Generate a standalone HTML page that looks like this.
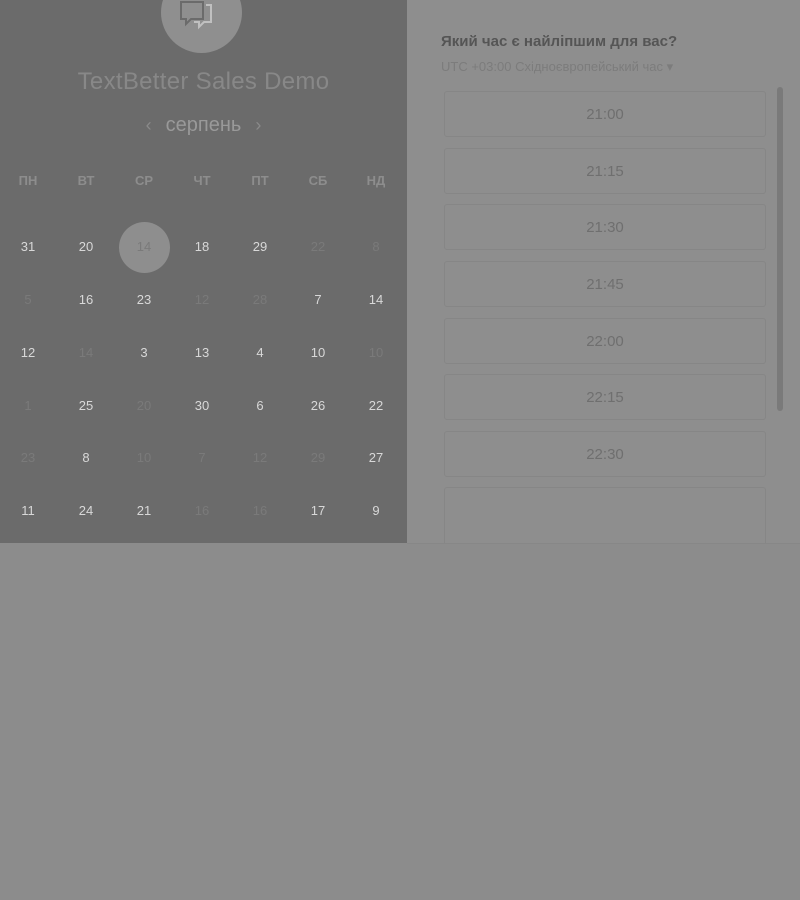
<!DOCTYPE html>
<html><head><meta charset="utf-8"><style>
body{margin:0;width:800px;height:900px;background:#8c8c8c;font-family:"Liberation Sans",sans-serif;position:relative;overflow:hidden}
.left{position:absolute;left:0;top:0;width:407px;height:543px;background:#6b6b6b}
.right{position:absolute;left:407px;top:0;width:393px;height:543px;background:#8e8e8e;border-bottom:1px solid #878787}
.avatar{position:absolute;left:161px;top:-28px;width:81px;height:81px;border-radius:50%;background:#8f8f8f}
.title{position:absolute;left:0;width:407px;top:68px;text-align:center;font-size:24px;letter-spacing:0.3px;color:#888;}
.month{position:absolute;left:0;width:407px;top:114px;text-align:center;font-size:20px;color:#999}
.month span{color:#8a8a8a;font-size:18px;margin:0 14px}
.d{position:absolute;width:50px;margin-left:-25px;text-align:center;font-size:13px;color:#d8d8d8}
.h{font-weight:bold;color:#8d8d8d;font-size:13px}
.dim{color:#7a7a7a}
.sel{position:absolute;left:119px;top:222px;width:51px;height:51px;border-radius:50%;background:#8e8e8e}
.q{position:absolute;left:441px;top:33px;font-size:15px;font-weight:bold;color:#555}
.tz{position:absolute;left:441px;top:59px;font-size:13px;color:#7c7c7c}
.slot{position:absolute;left:444px;width:322px;height:46px;border:1px solid #868686;border-radius:3px;box-sizing:border-box;text-align:center;line-height:45px;font-size:15px;color:#6f6f6f}
.sb{position:absolute;left:777px;top:87px;width:6px;height:324px;border-radius:3px;background:#7a7a7a}
</style></head><body>
<div class="left"></div>
<div class="right"></div>
<div class="avatar"><svg width="81" height="81" viewBox="0 0 81 81"><path d="M20 30h22v17h-12l-5 5v-5h-5z" fill="none" stroke="#6b6b6b" stroke-width="2"/><path d="M45 33h5v17h-7l-5 5v-5h-5" fill="none" stroke="#c0c0c0" stroke-width="2"/></svg></div>
<div class="title">TextBetter Sales Demo</div>
<div class="month"><span>‹</span>серпень<span>›</span></div>
<div class="sel"></div>
<div id="cal"></div>
<div class="q">Який час є найліпшим для вас?</div>
<div class="tz">UTC +03:00 Східноєвропейський час ▾</div>
<div class="slot" style="top:91px">21:00</div>
<div class="slot" style="top:148px">21:15</div>
<div class="slot" style="top:204px">21:30</div>
<div class="slot" style="top:261px">21:45</div>
<div class="slot" style="top:318px">22:00</div>
<div class="slot" style="top:374px">22:15</div>
<div class="slot" style="top:431px">22:30</div>
<div class="slot" style="top:487px;height:56px;border-bottom:none;border-radius:3px 3px 0 0"></div>
<div class="sb"></div>
<script>
var xs=[28,86,144,202,260,318,376],ys=[247,300,353,406,458,511];
var hd=["ПН","ВТ","СР","ЧТ","ПТ","СБ","НД"];
var rows=[["31","20","14","18","29","22*","8*"],["5*","16","23","12*","28*","7","14"],["12","14*","3","13","4","10","10*"],["1*","25","20*","30","6","26","22"],["23*","8","10*","7*","12*","29*","27"],["11","24","21","16*","16*","17","9"]];
var h="";
for(var i=0;i<7;i++)h+='<div class="d h" style="left:'+xs[i]+'px;top:173px">'+hd[i]+'</div>';
for(var r=0;r<6;r++)for(var c=0;c<7;c++){var t=rows[r][c],cl="d";if(t.indexOf("*")>0){cl+=" dim";t=t.replace("*","")}if(r==0&&c==2)cl+=" dim";h+='<div class="'+cl+'" style="left:'+xs[c]+'px;top:'+(ys[r]-8)+'px">'+t+'</div>'}
document.getElementById("cal").innerHTML=h;
</script>
</body></html>
